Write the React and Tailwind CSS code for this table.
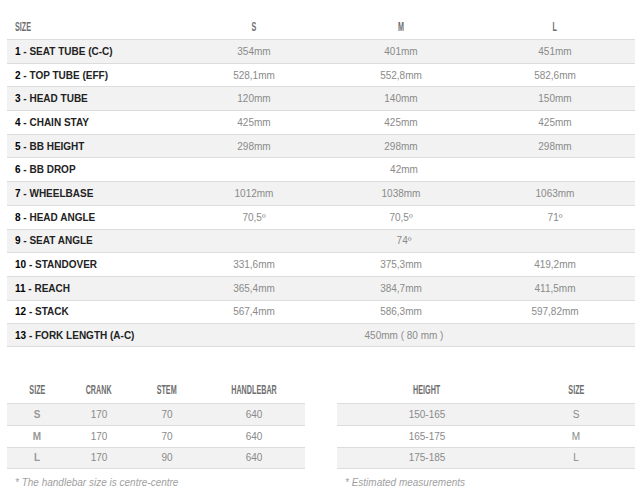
import React from "react";

const main = [
  ["1", "SEAT TUBE (C-C)", ["354mm", "401mm", "451mm"]],
  ["2", "TOP TUBE (EFF)", ["528,1mm", "552,8mm", "582,6mm"]],
  ["3", "HEAD TUBE", ["120mm", "140mm", "150mm"]],
  ["4", "CHAIN STAY", ["425mm", "425mm", "425mm"]],
  ["5", "BB HEIGHT", ["298mm", "298mm", "298mm"]],
  ["6", "BB DROP", "42mm"],
  ["7", "WHEELBASE", ["1012mm", "1038mm", "1063mm"]],
  ["8", "HEAD ANGLE", ["70,5º", "70,5º", "71º"]],
  ["9", "SEAT ANGLE", "74º"],
  ["10", "STANDOVER", ["331,6mm", "375,3mm", "419,2mm"]],
  ["11", "REACH", ["365,4mm", "384,7mm", "411,5mm"]],
  ["12", "STACK", ["567,4mm", "586,3mm", "597,82mm"]],
  ["13", "FORK LENGTH (A-C)", "450mm ( 80 mm )"],
];

const Head = ({ children, left }) => (
  <span
    className={
      "inline-block font-bold text-[12px] leading-none text-[#6e6e6e] scale-x-[0.6] " +
      (left ? "origin-left" : "origin-center")
    }
  >
    {children}
  </span>
);

const font = { fontFamily: '"Liberation Sans", Arial, sans-serif' };

export default function App() {
  return (
    <div className="w-[640px] h-[496px] bg-white pt-3 overflow-hidden" style={font}>
      <div className="ml-[7px] w-[628px]">
        <div className="grid grid-cols-[174px_146px_148px_160px] h-[27px] items-center">
          <div className="pl-2"><Head left>SIZE</Head></div>
          <div className="text-center"><Head>S</Head></div>
          <div className="text-center"><Head>M</Head></div>
          <div className="text-center"><Head>L</Head></div>
        </div>
        {main.map(([n, label, vals], i) => (
          <div
            key={n}
            className={
              "grid grid-cols-[174px_146px_148px_160px] h-[23.7px] items-center border-t border-[#dcdcdc] " +
              (i % 2 === 0 ? "bg-[#f2f2f2] " : "bg-white ") +
              (i === main.length - 1 ? "border-b" : "")
            }
          >
            <div className="pl-2 text-[10px] font-bold text-[#222] whitespace-nowrap">
              <span className="text-black">{n}</span> - {label}
            </div>
            {Array.isArray(vals) ? (
              vals.map((v, j) => (
                <div key={j} className="text-center text-[10px] text-[#8a8a8a]">
                  {v}
                </div>
              ))
            ) : (
              <div className="col-span-3 text-center text-[10px] text-[#8a8a8a] pr-[8px]">{vals}</div>
            )}
          </div>
        ))}
      </div>

      <div className="flex mt-[28px] ml-[7px]">
        <div className="w-[298px]">
          <div className="grid grid-cols-[60px_64px_72px_102px] h-[28px] items-center text-center">
            <div><Head>SIZE</Head></div>
            <div><Head>CRANK</Head></div>
            <div><Head>STEM</Head></div>
            <div><Head>HANDLEBAR</Head></div>
          </div>
          {[["S", "170", "70", "640"], ["M", "170", "70", "640"], ["L", "170", "90", "640"]].map((r, i) => (
            <div
              key={i}
              className={
                "grid grid-cols-[60px_64px_72px_102px] h-[22px] items-center text-center text-[10px] text-[#8a8a8a] border-t border-[#dcdcdc] " +
                (i % 2 === 0 ? "bg-[#f2f2f2] " : "bg-white ") +
                (i === 2 ? "border-b" : "")
              }
            >
              <div className="font-bold text-[#999]">{r[0]}</div>
              <div>{r[1]}</div>
              <div>{r[2]}</div>
              <div>{r[3]}</div>
            </div>
          ))}
          <div className="mt-[6px] pl-2 text-[10px] italic text-[#a0a0a0]">* The handlebar size is centre-centre</div>
        </div>

        <div className="w-[298px] ml-[32px]">
          <div className="grid grid-cols-[180px_118px] h-[28px] items-center text-center">
            <div><Head>HEIGHT</Head></div>
            <div><Head>SIZE</Head></div>
          </div>
          {[["150-165", "S"], ["165-175", "M"], ["175-185", "L"]].map((r, i) => (
            <div
              key={i}
              className={
                "grid grid-cols-[180px_118px] h-[22px] items-center text-center text-[10px] text-[#8a8a8a] border-t border-[#dcdcdc] " +
                (i % 2 === 0 ? "bg-[#f2f2f2] " : "bg-white ") +
                (i === 2 ? "border-b" : "")
              }
            >
              <div>{r[0]}</div>
              <div>{r[1]}</div>
            </div>
          ))}
          <div className="mt-[6px] pl-2 text-[10px] italic text-[#a0a0a0]">* Estimated measurements</div>
        </div>
      </div>
    </div>
  );
}
